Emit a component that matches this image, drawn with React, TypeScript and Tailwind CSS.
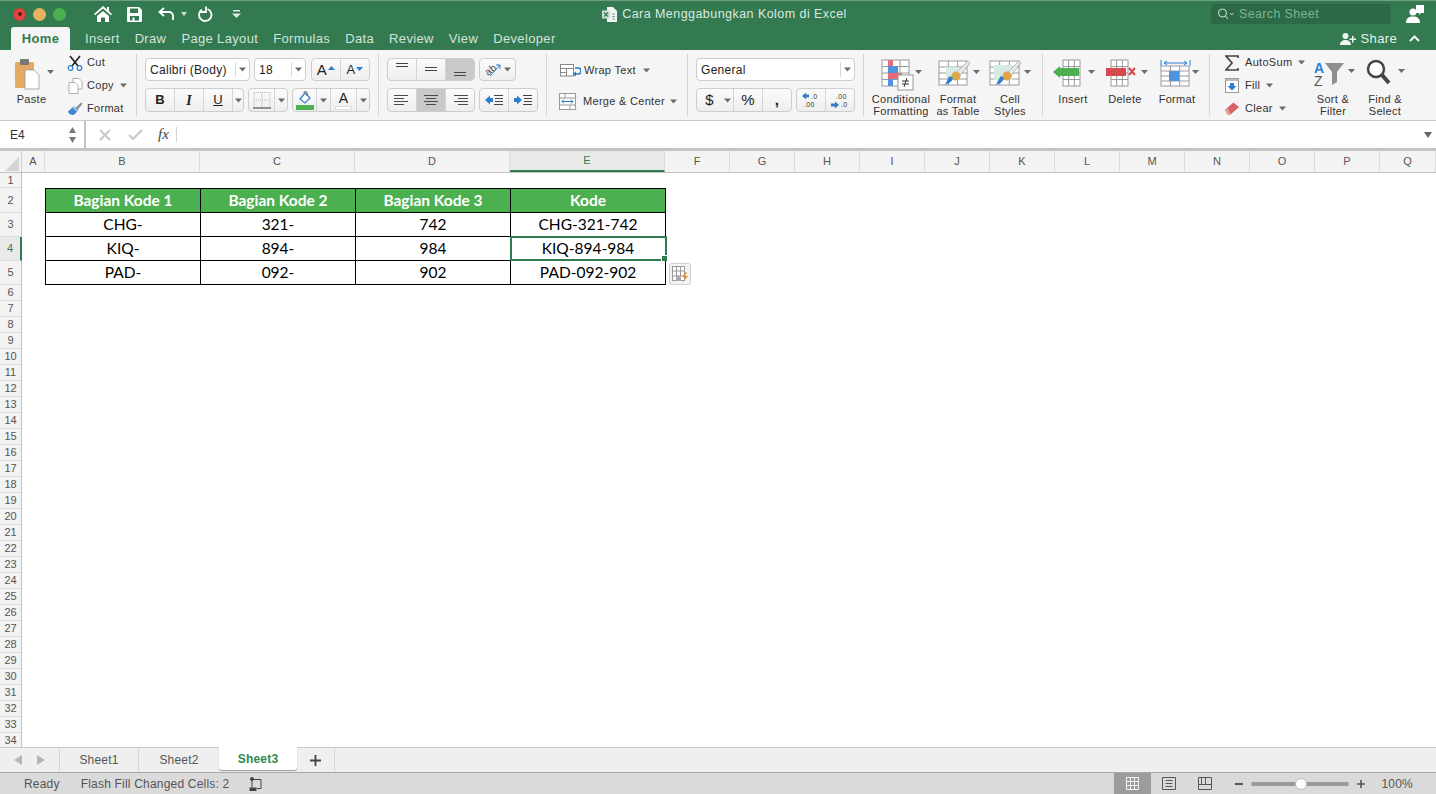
import React from 'react';

const Caret = ({ className = '' }: { className?: string }) => (
  <svg width="7" height="5" viewBox="0 0 7 5" className={'shrink-0 ' + className}>
    <path d="M0 .5h7L3.500 4.500z" fill="#6b6b6b" />
  </svg>
);

const tabs = ['Insert', 'Draw', 'Page Layout', 'Formulas', 'Data', 'Review', 'View', 'Developer'];

function TitleBar() {
  return (
    <div className="h-[27px] flex items-center border-t border-[#6d9f82] bg-[#337a50] shrink-0">
      <div className="flex-1 flex items-center pl-[13px]">
        <div className="flex gap-[7px]">
          <div className="w-[13px] h-[13px] rounded-full bg-[#e0443e] border border-[#c9403a] flex items-center justify-center">
            <div className="w-[4px] h-[4px] rounded-full bg-[#6b1210]" />
          </div>
          <div className="w-[13px] h-[13px] rounded-full bg-[#e6b35c]" />
          <div className="w-[13px] h-[13px] rounded-full bg-[#4bb04f]" />
        </div>
        <svg width="18" height="16" viewBox="0 0 18 16" className="ml-[28px]" fill="#fff">
          <path d="M9 0L0 8l1 1.200L9 2.500l8 6.700L18 8l-3-2.700V1h-2v2.500zM3 10l6-5 6 5v6h-4v-4.500H7V16H3z" />
        </svg>
        <svg width="15" height="15" viewBox="0 0 15 15" className="ml-[15px]">
          <path fillRule="evenodd" fill="#fff" d="M0 1a1 1 0 0 1 1-1h11l3 3v11a1 1 0 0 1-1 1H1a1 1 0 0 1-1-1zM3 1.500V6h8V1.500zM3 9v4.500h2.500V10.500h2V13.500H12V9z" />
        </svg>
        <svg width="17" height="14" viewBox="0 0 17 14" className="ml-[16px]" fill="none" stroke="#fff" strokeWidth="1.800">
          <path d="M6 1L1.500 5 6 9M2 5h9a4 4 0 0 1 4 4v4" />
        </svg>
        <svg width="6" height="4" viewBox="0 0 6 4" className="ml-[6px]"><path d="M0 0h6L3 4z" fill="#cfe0d6" /></svg>
        <svg width="16" height="16" viewBox="0 0 16 16" className="ml-[10px]" fill="none" stroke="#fff" strokeWidth="1.800">
          <path d="M5 3.500a6.200 6.200 0 1 0 5.500-.5M9 .5v5.500H3.500" />
        </svg>
        <svg width="9" height="8" viewBox="0 0 9 8" className="ml-[19px]" fill="#dfe9e3"><path d="M1 0h7v1.500H1zM0 3.500h9L4.500 8z" /></svg>
      </div>
      <div className="flex items-center gap-[5px] text-[12.5px] tracking-[0.45px] text-[#dce8e1]">
        <svg width="15" height="15" viewBox="0 0 15 15">
          <path d="M5 0h6l4 4v11H5z" fill="#f2f6f3" />
          <rect x="0" y="3.500" width="8" height="8" fill="#cfdcd4" />
          <path d="M2 5.500l4 4M6 5.500l-4 4" stroke="#337a50" strokeWidth="1.200" />
          <path d="M10 7h3M10 9.500h3M10 12h3" stroke="#7ea58e" />
        </svg>
        Cara Menggabungkan Kolom di Excel
      </div>
      <div className="flex-1 flex items-center justify-end">
        <div className="w-[180px] h-[20px] rounded-[3px] bg-[#2b6a44] flex items-center pl-[6px] text-[12.5px] tracking-[0.35px] text-[#7fb394]">
          <svg width="18" height="12" viewBox="0 0 18 12" fill="none" stroke="#d7e4dc" strokeWidth="1">
            <circle cx="5.500" cy="5" r="4" />
            <path d="M8.500 8l2.500 3M13 5l1.800 1.800L16.600 5" />
          </svg>
          <span className="ml-[4px]">Search Sheet</span>
        </div>
        <svg width="18" height="18" viewBox="0 0 18 18" className="ml-[15px] mr-[12px]" fill="#fff">
          <path d="M10 0h8v8h-3l-2 2V8h-3z" />
          <circle cx="7" cy="7" r="3.500" />
          <path d="M0 18c0-5 3-6.500 7-6.500s7 1.500 7 6.500z" />
        </svg>
      </div>
    </div>
  );
}

function TabRow() {
  return (
    <div className="h-[23px] flex bg-[#337a50] shrink-0 pl-[11px] text-[13px] tracking-[0.35px] font-medium text-[#d3e3da]">
      <div className="w-[59px] rounded-t-[3px] bg-[#f5f5f5] flex items-center justify-center font-bold text-[#337a50]">Home</div>
      {tabs.map((t) => (
        <div key={t} className="flex items-center ml-[15px]">{t}</div>
      ))}
      <div className="ml-auto flex items-center text-white">
        <svg width="16" height="12" viewBox="0 0 16 12" fill="#eef4f0">
          <circle cx="5.500" cy="3" r="3" />
          <path d="M0 12c0-3.500 2.500-5 5.500-5s5.500 1.500 5.500 5zM12 3h1.500v2.500H16V7h-2.500v2.500H12V7H9.500V5.500H12z" />
        </svg>
        <span className="ml-[5px] text-[#e8f0eb]">Share</span>
        <svg width="11" height="7" viewBox="0 0 11 7" fill="none" stroke="#eef4f0" strokeWidth="2" className="ml-[12px] mr-[16px]">
          <path d="M1 6l4.500-4.500L10 6" />
        </svg>
      </div>
    </div>
  );
}

const Sep = () => <div className="w-px my-[4px] bg-[#d6d6d6] shrink-0" />;

function Group({ className, children }: { className: string; children: React.ReactNode }) {
  return <div className={'shrink-0 h-full ' + className}>{children}</div>;
}

function BtnGroup({ className = '', children }: { className?: string; children: React.ReactNode }) {
  return (
    <div className={'flex rounded-[4px] border border-[#cdcdcd] bg-gradient-to-b from-[#fbfbfb] to-[#eeeeee] overflow-hidden ' + className}>
      {children}
    </div>
  );
}

function Cell({ className = '', active, children }: { className?: string; active?: boolean; children?: React.ReactNode }) {
  return (
    <div className={'flex items-center justify-center border-r last:border-r-0 border-[#d4d4d4] h-full ' + (active ? 'bg-[#c9c9c9] ' : '') + className}>
      {children}
    </div>
  );
}

function Lines({ rows }: { rows: [number, number][] }) {
  return (
    <svg width="18" height="12" viewBox="0 0 18 12" stroke="#4a4a4a" strokeWidth="1">
      {rows.map(([a, b], i) => (
        <path key={i} d={'M' + a + ' ' + (i * 3 + 1.5) + 'H' + b} />
      ))}
    </svg>
  );
}

function SmallAction({ icon, label, caret, gap = 'ml-[7px]' }: { icon: React.ReactNode; label: string; caret?: boolean; gap?: string }) {
  return (
    <div className="h-[23px] flex items-center">
      <div className="w-[16px] flex justify-center">{icon}</div>
      <span className={gap}>{label}</span>
      {caret && <Caret className="ml-[6px]" />}
    </div>
  );
}

function BigBtn({ w, label, label2, icon }: { w: string; label: string; label2?: string; icon: React.ReactNode }) {
  return (
    <div className={'shrink-0 flex flex-col items-center pt-[8px] ' + w}>
      <div className="h-[35px] w-full">{icon}</div>
      <div className="leading-[12px] text-center whitespace-nowrap">{label}</div>
      {label2 && <div className="leading-[12px] text-center whitespace-nowrap">{label2}</div>}
    </div>
  );
}

function MiniGrid({ x, y, w, h }: { x: number; y: number; w: number; h: number }) {
  const cw = w / 3;
  const ch = h / 4;
  return (
    <g stroke="#9a9a9a" strokeWidth="1" fill="none">
      <rect x={x} y={y} width={w} height={h} fill="#fff" />
      <path d={'M' + (x + cw) + ' ' + y + 'v' + h + 'M' + (x + 2 * cw) + ' ' + y + 'v' + h} />
      <path d={'M' + x + ' ' + (y + ch) + 'h' + w + 'M' + x + ' ' + (y + 2 * ch) + 'h' + w + 'M' + x + ' ' + (y + 3 * ch) + 'h' + w} />
    </g>
  );
}

const smallCaret = (x: number, y: number) => <path d={'M' + x + ' ' + y + 'h7l-3.500 4z'} fill="#6b6b6b" />;

const Brush = ({ x, y }: { x: number; y: number }) => (
  <g transform={'translate(' + x + ' ' + y + ')'}>
    <path d="M14 13L27 0l2 2L18 16z" fill="#e8e8e8" stroke="#9a9a9a" strokeWidth=".7" />
    <circle cx="15" cy="15" r="4.500" fill="#dfa54a" />
    <path d="M12 17c-1 4-5 6-9 7 3-2 3-6 6-9z" fill="#2f7dd1" />
  </g>
);

function Ribbon() {
  return (
    <div className="h-[71px] flex bg-[#f5f5f5] border-b border-[#c9c9c9] shrink-0 text-[11px] tracking-[0.3px] text-[#333]">
      <Group className="w-[136px] flex">
        <BigBtn
          w="w-[63px]"
          label="Paste"
          icon={
            <svg width="63" height="35" viewBox="0 0 63 35" className="-mt-[1px]">
              <rect x="15" y="5" width="19" height="26" rx="1.500" fill="#e3aa63" />
              <rect x="20" y="2" width="9" height="6" rx="1" fill="#777" />
              <path d="M25 13h9l5 5v14H25z" fill="#fff" stroke="#9a9a9a" strokeWidth=".8" />
              {smallCaret(47, 13)}
            </svg>
          }
        />
        <div className="pl-[4px] pt-[1px]">
          <SmallAction
            label="Cut"
            gap="ml-[4px]"
            icon={
              <svg width="16" height="16" viewBox="0 0 16 16" fill="none">
                <path d="M3 1l8 10M13 1L5 11" stroke="#222" strokeWidth="1.600" />
                <circle cx="3.500" cy="13" r="2.300" stroke="#2f7dd1" strokeWidth="1.200" />
                <circle cx="12.500" cy="13" r="2.300" stroke="#2f7dd1" strokeWidth="1.200" />
              </svg>
            }
          />
          <SmallAction
            label="Copy"
            gap="ml-[4px]"
            caret
            icon={
              <svg width="15" height="16" viewBox="0 0 15 16" fill="#fff" stroke="#9a9a9a" strokeWidth=".8">
                <path d="M5 .5h6l3 3V11H5z" />
                <path d="M1 4.500h6l3 3v8H1z" />
              </svg>
            }
          />
          <SmallAction
            label="Format"
            gap="ml-[4px]"
            icon={
              <svg width="17" height="15" viewBox="0 0 17 15">
                <path d="M9 7l6-6 1.500 1.500L11 9z" fill="#8a8a8a" />
                <path d="M1 11l6-6 5 4-4 5c-3 1-5 0-7-3z" fill="#3f86d3" />
                <path d="M6 6l5 4" stroke="#d8e5f3" strokeWidth="1.200" />
              </svg>
            }
          />
        </div>
      </Group>
      <Sep />
      <Group className="w-[241px] pl-[8px] pt-[8px] flex flex-col gap-[7px] text-[12px] text-[#222]">
        <div className="flex h-[23px] gap-[4px]">
          <div className="w-[105px] rounded-[4px] border border-[#cdcdcd] bg-white flex items-center pl-[4px]">
            <span className="flex-1">Calibri (Body)</span>
            <div className="w-[14px] h-[15px] border-l border-[#d8d8d8] flex items-center justify-center"><Caret /></div>
          </div>
          <div className="w-[52px] rounded-[4px] border border-[#cdcdcd] bg-white flex items-center pl-[4px]">
            <span className="flex-1">18</span>
            <div className="w-[14px] h-[15px] border-l border-[#d8d8d8] flex items-center justify-center"><Caret /></div>
          </div>
          <BtnGroup className="w-[59px] ml-[1px]">
            <Cell className="flex-1">
              <span className="text-[15px] leading-none">A</span>
              <svg width="7" height="4" viewBox="0 0 7 4" className="ml-[1px] -mt-[3px]"><path d="M3.500 0L7 4H0z" fill="#2f7dd1" /></svg>
            </Cell>
            <Cell className="flex-1">
              <span className="text-[13px] leading-none">A</span>
              <svg width="7" height="4" viewBox="0 0 7 4" className="ml-[1px] -mt-[2px]"><path d="M0 0h7L3.500 4z" fill="#2f7dd1" /></svg>
            </Cell>
          </BtnGroup>
        </div>
        <div className="flex h-[24px] gap-[4px]">
          <BtnGroup className="w-[99px]">
            <Cell className="w-[29px] font-bold text-[13px]">B</Cell>
            <Cell className="w-[29px] italic font-['Liberation_Serif'] font-bold text-[14px]">I</Cell>
            <Cell className="w-[29px] underline text-[13px]">U</Cell>
            <Cell className="flex-1"><Caret /></Cell>
          </BtnGroup>
          <BtnGroup className="w-[40px]">
            <Cell className="flex-1">
              <svg width="18" height="17" viewBox="0 0 18 17" fill="none" stroke="#b5b5b5" strokeDasharray="1 1">
                <path d="M1 .5h16v15M1 .5v15M9 .5v15M1 8h16" />
                <path d="M0 16h18" stroke="#333" strokeDasharray="none" />
              </svg>
            </Cell>
            <Cell className="w-[12px]"><Caret /></Cell>
          </BtnGroup>
          <BtnGroup className="w-[78px]">
            <Cell className="w-[24px]">
              <svg width="18" height="19" viewBox="0 0 18 19">
                <path d="M4 8l5-6 5 5-5 5z" fill="#fff" stroke="#2f7dd1" strokeWidth="1.200" />
                <path d="M8 2c0-2 3-2 3 0v3" fill="none" stroke="#555" />
                <rect y="14" width="18" height="5" fill="#4caf50" />
              </svg>
            </Cell>
            <Cell className="w-[14px]"><Caret /></Cell>
            <Cell className="w-[26px]">
              <div className="flex flex-col items-center">
                <span className="text-[14px] leading-[15px]">A</span>
                <div className="w-[17px] h-[4px] bg-white border border-[#dddddd]" />
              </div>
            </Cell>
            <Cell className="flex-1"><Caret /></Cell>
          </BtnGroup>
        </div>
      </Group>
      <Sep />
      <Group className="w-[167px] pl-[8px] pt-[8px] flex flex-col gap-[7px]">
        <div className="flex h-[23px] gap-[4px]">
          <BtnGroup className="w-[88px]">
            <Cell className="flex-1 items-start pt-[4px]">
              <svg width="14" height="5" viewBox="0 0 14 5" stroke="#444"><path d="M1 .5h12M1 3.500h12" /></svg>
            </Cell>
            <Cell className="flex-1">
              <svg width="14" height="5" viewBox="0 0 14 5" stroke="#444"><path d="M1 .5h12M1 3.500h12" /></svg>
            </Cell>
            <Cell className="flex-1 items-end pb-[3px]" active>
              <svg width="14" height="5" viewBox="0 0 14 5" stroke="#444"><path d="M1 .5h12M1 3.500h12" /></svg>
            </Cell>
          </BtnGroup>
          <BtnGroup className="w-[37px]">
            <Cell className="flex-1">
              <svg width="18" height="17" viewBox="0 0 18 17">
                <text x="0" y="12" fontSize="10" fill="#444" transform="rotate(-38 6 9)" fontFamily="Liberation Sans">ab</text>
                <path d="M5 15L15 4M11 4h4v4" fill="none" stroke="#2f7dd1" />
              </svg>
              <Caret className="ml-[1px]" />
            </Cell>
          </BtnGroup>
        </div>
        <div className="flex h-[24px] gap-[4px]">
          <BtnGroup className="w-[88px]">
            <Cell className="flex-1"><Lines rows={[[1, 15], [1, 11], [1, 15], [1, 11]]} /></Cell>
            <Cell className="flex-1" active><Lines rows={[[2, 16], [4, 14], [2, 16], [4, 14]]} /></Cell>
            <Cell className="flex-1"><Lines rows={[[3, 17], [7, 17], [3, 17], [7, 17]]} /></Cell>
          </BtnGroup>
          <BtnGroup className="w-[59px]">
            <Cell className="flex-1">
              <svg width="18" height="12" viewBox="0 0 18 12">
                <path d="M0 6l5-4.500V4h3v4H5v2.500z" fill="#2f7dd1" />
                <path d="M9 1.500h9M10 4.500h8M10 7.500h8M9 10.500h9" stroke="#444" />
              </svg>
            </Cell>
            <Cell className="flex-1">
              <svg width="18" height="12" viewBox="0 0 18 12">
                <path d="M8 6L3 1.500V4H0v4h3v2.500z" fill="#2f7dd1" />
                <path d="M9 1.500h9M10 4.500h8M10 7.500h8M9 10.500h9" stroke="#444" />
              </svg>
            </Cell>
          </BtnGroup>
        </div>
      </Group>
      <Sep />
      <Group className="w-[140px] pl-[13px] pt-[9px] flex flex-col gap-[7px]">
        <div className="h-[23px] flex items-center">
          <svg width="21" height="13" viewBox="0 0 21 13" fill="none">
            <rect x=".5" y=".5" width="13" height="11.500" stroke="#888" fill="#fff" />
            <path d="M.5 4.500h13M.5 8.500h6M6.500 4.500v7.500" stroke="#888" />
            <path d="M15 4h3a2.500 2.500 0 0 1 0 6h-3" stroke="#2f7dd1" strokeWidth="1.600" />
            <path d="M16 7.500L12.500 10l3.500 2.500z" fill="#2f7dd1" />
          </svg>
          <span className="ml-[3px]">Wrap Text</span>
          <Caret className="ml-[7px]" />
        </div>
        <div className="h-[24px] flex items-center">
          <svg width="21" height="17" viewBox="0 0 21 17" fill="none" className="-ml-[1px]">
            <rect x=".5" y=".5" width="16" height="16" stroke="#999" fill="#fff" />
            <path d="M.5 5h16M.5 12h16M6 .5V5M11 12v4.500" stroke="#999" />
            <path d="M3 8.500h11M5 6.500l-2 2 2 2M12 6.500l2 2-2 2" stroke="#2f7dd1" />
          </svg>
          <span className="ml-[3px]">Merge &amp; Center</span>
          <Caret className="ml-[5px]" />
        </div>
      </Group>
      <Sep />
      <Group className="w-[175px] pl-[8px] pt-[8px] flex flex-col gap-[7px] text-[#222]">
        <div className="w-[159px] h-[23px] rounded-[4px] border border-[#cdcdcd] bg-white flex items-center pl-[4px] text-[12px]">
          <span className="flex-1">General</span>
          <div className="w-[14px] h-[15px] border-l border-[#d8d8d8] flex items-center justify-center"><Caret /></div>
        </div>
        <div className="flex h-[24px] gap-[4px]">
          <BtnGroup className="w-[96px]">
            <Cell className="w-[25px] border-r-0 text-[15px]">$</Cell>
            <Cell className="w-[12px]"><Caret /></Cell>
            <Cell className="w-[29px] text-[15px]">%</Cell>
            <Cell className="flex-1 font-bold text-[15px]">,</Cell>
          </BtnGroup>
          <BtnGroup className="w-[59px]">
            <Cell className="flex-1">
              <svg width="18" height="17" viewBox="0 0 18 17">
                <path d="M0 4l4-3.500V2.500h3v3H4v2z" fill="#2f7dd1" />
                <text x="9" y="7" fontSize="7" fill="#333" fontFamily="Liberation Sans">.0</text>
                <text x="2" y="15" fontSize="7" fill="#333" fontFamily="Liberation Sans">.00</text>
              </svg>
            </Cell>
            <Cell className="flex-1">
              <svg width="18" height="17" viewBox="0 0 18 17">
                <text x="5" y="7" fontSize="7" fill="#333" fontFamily="Liberation Sans">.00</text>
                <path d="M8 13L4 9.500v2H0v3h4v2z" fill="#2f7dd1" />
                <text x="10" y="15" fontSize="7" fill="#333" fontFamily="Liberation Sans">.0</text>
              </svg>
            </Cell>
          </BtnGroup>
        </div>
      </Group>
      <Sep />
      <Group className="w-[178px] flex">
        <BigBtn
          w="w-[74px]"
          label="Conditional"
          label2="Formatting"
          icon={
            <svg width="74" height="35" viewBox="0 0 74 35" className="overflow-visible">
              <MiniGrid x={18} y={2} w={27} h={26} />
              <rect x="24" y="2" width="5" height="6" fill="#e66d75" />
              <rect x="24" y="8" width="10" height="7" fill="#4d94dc" />
              <rect x="24" y="15" width="14" height="6" fill="#e66d75" />
              <rect x="24" y="21" width="5" height="7" fill="#4d94dc" />
              <rect x="34" y="17" width="15" height="15" fill="#fff" stroke="#999" />
              <path d="M38 23h7M38 26h7M43 20l-3 9" stroke="#333" fill="none" />
              {smallCaret(51, 12)}
            </svg>
          }
        />
        <BigBtn
          w="w-[40px]"
          label="Format"
          label2="as Table"
          icon={
            <svg width="40" height="35" viewBox="0 0 40 35" className="overflow-visible">
              <MiniGrid x={1} y={3} w={28} h={24} />
              <rect x="8" y="9" width="12" height="10" fill="#d5ebe3" />
              <Brush x={3} y={3} />
              {smallCaret(35, 12)}
            </svg>
          }
        />
        <BigBtn
          w="w-[64px]"
          label="Cell"
          label2="Styles"
          icon={
            <svg width="64" height="35" viewBox="0 0 64 35" className="overflow-visible">
              <MiniGrid x={12} y={3} w={29} h={24} />
              <rect x="16" y="7" width="18" height="15" fill="#d5ebe3" />
              <Brush x={14} y={3} />
              {smallCaret(46, 12)}
            </svg>
          }
        />
      </Group>
      <Sep />
      <Group className="w-[166px] flex">
        <BigBtn
          w="w-[60px]"
          label="Insert"
          icon={
            <svg width="60" height="35" viewBox="0 0 60 35">
              <MiniGrid x={20} y={2} w={17} h={26} />
              <rect x="16" y="10" width="20" height="8" fill="#4caf50" />
              <path d="M10 14l7-6v12z" fill="#4caf50" />
              {smallCaret(45, 12)}
            </svg>
          }
        />
        <BigBtn
          w="w-[44px]"
          label="Delete"
          icon={
            <svg width="44" height="35" viewBox="0 0 44 35" className="overflow-visible">
              <MiniGrid x={8} y={2} w={17} h={26} />
              <rect x="3" y="10" width="20" height="8" fill="#d9474f" />
              <path d="M26 10l6 7M32 10l-6 7" stroke="#d9474f" strokeWidth="2" />
              {smallCaret(38, 12)}
            </svg>
          }
        />
        <BigBtn
          w="w-[60px]"
          label="Format"
          icon={
            <svg width="60" height="35" viewBox="0 0 60 35">
              <path d="M14 2v6M43 2v6M17 5h23M17 5l3-2M17 5l3 2M40 5l-3-2M40 5l-3 2" stroke="#2f7dd1" fill="none" />
              <MiniGrid x={14} y={8} w={28} h={20} />
              <rect x="22" y="13" width="10" height="10" fill="#4d94dc" />
              {smallCaret(45, 12)}
            </svg>
          }
        />
      </Group>
      <Sep />
      <Group className="flex-1 flex">
        <div className="w-[97px] pl-[14px] pt-[1px]">
          <SmallAction
            label="AutoSum"
            gap="ml-[5px]"
            caret
            icon={
              <svg width="14" height="16" viewBox="0 0 14 16" fill="none"><path d="M13 3V1H1l6 7-6 7h12v-2" stroke="#444" strokeWidth="1.700" /></svg>
            }
          />
          <SmallAction
            label="Fill"
            gap="ml-[5px]"
            caret
            icon={
              <svg width="14" height="15" viewBox="0 0 14 15">
                <rect x=".5" y=".5" width="13" height="14" fill="#fff" stroke="#999" />
                <rect x="1" y="1" width="12" height="2" fill="#bbb" />
                <path d="M5 5h4v3h2.500L7 12.500 2.500 8H5z" fill="#2f7dd1" />
              </svg>
            }
          />
          <SmallAction
            label="Clear"
            gap="ml-[5px]"
            caret
            icon={
              <svg width="17" height="15" viewBox="0 0 17 15">
                <path d="M1 9l9-8 6 5-9 8H4z" fill="#d9626a" />
                <path d="M1 9l3 5h3L4 7z" fill="#eb9aa0" />
              </svg>
            }
          />
        </div>
        <BigBtn
          w="w-[52px]"
          label="Sort &"
          label2="Filter"
          icon={
            <svg width="52" height="35" viewBox="0 0 52 35" className="overflow-visible">
              <text x="7" y="15" fontSize="14" fontWeight="bold" fill="#2f7dd1" fontFamily="Liberation Sans">A</text>
              <text x="7" y="28" fontSize="14" fill="#555" fontFamily="Liberation Sans">Z</text>
              <path d="M18 5h19l-7 9v10l-5 3V14z" fill="#8f8f8f" />
              {smallCaret(41, 11)}
            </svg>
          }
        />
        <BigBtn
          w="w-[52px]"
          label="Find &"
          label2="Select"
          icon={
            <svg width="52" height="35" viewBox="0 0 52 35" className="overflow-visible">
              <circle cx="17" cy="11" r="8" fill="#fff" stroke="#444" strokeWidth="2.500" />
              <path d="M23 17l7 8" stroke="#444" strokeWidth="4" />
              {smallCaret(39, 11)}
            </svg>
          }
        />
      </Group>
    </div>
  );
}

function FormulaBar() {
  return (
    <div className="h-[30px] flex bg-white border-b-[3px] border-b-[#c4c4c4] shrink-0">
      <div className="w-[86px] border-r-2 border-r-[#c4c4c4] flex items-center justify-between pl-[10px] pr-[8px] text-[12px] text-[#333]">
        E4
        <svg width="7" height="16" viewBox="0 0 7 16" fill="#777"><path d="M3.500 0L7 6H0zM0 10h7l-3.500 6z" /></svg>
      </div>
      <svg width="12" height="12" viewBox="0 0 12 12" className="ml-[13px] self-center" stroke="#c8c8c8" strokeWidth="2"><path d="M1 1l10 10M11 1L1 11" /></svg>
      <svg width="15" height="12" viewBox="0 0 15 12" className="ml-[17px] self-center" fill="none" stroke="#c8c8c8" strokeWidth="2"><path d="M1 6l4 4 9-9" /></svg>
      <div className="ml-[15px] self-center font-['Liberation_Serif'] italic text-[15px] text-[#444]">fx</div>
      <div className="ml-[7px] w-px h-[15px] self-center bg-[#d5d5d5]" />
      <div className="ml-auto mr-[4px] self-center">
        <svg width="8" height="6" viewBox="0 0 8 6"><path d="M0 0h8L4 6z" fill="#666" /></svg>
      </div>
    </div>
  );
}

const cols: [string, string][] = [
  ['A', 'w-[23px]'], ['B', 'w-[155px]'], ['C', 'w-[155px]'], ['D', 'w-[155px]'], ['E', 'w-[155px]'],
  ['F', 'w-[65px]'], ['G', 'w-[65px]'], ['H', 'w-[65px]'], ['I', 'w-[65px]'], ['J', 'w-[65px]'],
  ['K', 'w-[65px]'], ['L', 'w-[65px]'], ['M', 'w-[65px]'], ['N', 'w-[65px]'], ['O', 'w-[65px]'],
  ['P', 'w-[65px]'], ['Q', 'flex-1'],
];

const table: Record<number, string[]> = {
  2: ['Bagian Kode 1', 'Bagian Kode 2', 'Bagian Kode 3', 'Kode'],
  3: ['CHG-', '321-', '742', 'CHG-321-742'],
  4: ['KIQ-', '894-', '984', 'KIQ-894-984'],
  5: ['PAD-', '092-', '902', 'PAD-092-902'],
};

function Sheet() {
  const rows = Array.from({ length: 34 }, (_, i) => i + 1);
  return (
    <div className="flex-1 min-h-0 overflow-hidden bg-white">
      <div className="h-[22px] flex bg-[#f3f3f3] border-b border-[#c4c4c4] text-[11px] text-[#555]">
        <div className="w-[22px] shrink-0 border-r border-[#d0d0d0] relative">
          <svg width="14" height="14" viewBox="0 0 14 14" className="absolute right-[2px] bottom-[1px]"><path d="M14 0v14H0z" fill="#d4d4d4" /></svg>
        </div>
        {cols.map(([c, w]) => (
          <div
            key={c}
            className={'shrink-0 flex items-center justify-center border-r border-[#dcdcdc] ' + w + (c === 'E' ? ' bg-[#e9e9e9] text-[#2f7d4f] border-b-2 border-b-[#2f7d4f]' : '')}
          >
            {c}
          </div>
        ))}
      </div>
      {rows.map((r) => {
        const data = table[r];
        return (
          <div key={r} className={'flex ' + (r === 1 ? 'h-[15px]' : r === 2 ? 'h-[25px]' : data ? 'h-[24px]' : 'h-[16px]')}>
            <div
              className={'w-[22px] shrink-0 flex items-center justify-center text-[11px] border-b border-[#dcdcdc] ' + (r === 4 ? 'bg-[#e9e9e9] text-[#2f7d4f] border-r-2 border-r-[#2f7d4f]' : 'bg-[#f3f3f3] text-[#555] border-r border-r-[#c4c4c4]')}
            >
              {r}
            </div>
            <div className="w-[23px] shrink-0" />
            {data && data.map((v, i) => (
              <div
                key={i}
                className={
                  'relative shrink-0 flex items-center justify-center font-[Lato] text-[15.5px] border-b border-r border-black ' +
                  (i === 0 ? 'w-[156px] border-l ' : 'w-[155px] ') +
                  (r === 2 ? 'border-t bg-[#4caf50] font-bold text-white' : 'text-black')
                }
              >
                {v}
                {r === 4 && i === 3 && (
                  <div className="absolute -left-[1px] -top-[1px] -right-[2px] -bottom-[1px] border-2 border-[#2f7d4f]">
                    <div className="absolute -right-[3px] -bottom-[3px] w-[5px] h-[5px] bg-[#2f7d4f] border border-white box-content" />
                  </div>
                )}
                {r === 5 && i === 3 && (
                  <div className="absolute left-[158px] top-[2px] w-[22px] h-[22px] rounded-[3px] border border-[#cfcfcf] bg-[#f3f3f3] flex items-center justify-center">
                    <svg width="17" height="16" viewBox="0 0 17 16" fill="none">
                      <rect x=".5" y=".5" width="12" height="14" fill="#fff" stroke="#999" />
                      <path d="M.5 5h12M.5 10h12M4.500.5v14M8.500.5v14" stroke="#999" />
                      <rect x="4" y="10" width="5" height="5" fill="#aaa" />
                      <path d="M14 6l-4 5h3l-2 5 5-6h-3l2-4z" fill="#e58a2b" />
                    </svg>
                  </div>
                )}
              </div>
            ))}
          </div>
        );
      })}
    </div>
  );
}

function SheetTabs() {
  return (
    <div className="h-[25px] flex bg-[#efefef] border-t border-[#c9c9c9] shrink-0 text-[12px] text-[#555] tracking-[0.2px]">
      <div className="w-[60px] flex items-center justify-center gap-[15px] border-r border-[#d6d6d6]">
        <svg width="8" height="10" viewBox="0 0 8 10"><path d="M8 0v10L0 5z" fill="#b5b5b5" /></svg>
        <svg width="8" height="10" viewBox="0 0 8 10"><path d="M0 0v10l8-5z" fill="#b5b5b5" /></svg>
      </div>
      <div className="w-[79px] flex items-center justify-center border-r border-[#d6d6d6]">Sheet1</div>
      <div className="w-[80px] flex items-center justify-center">Sheet2</div>
      <div className="w-[78px] h-[23px] -mt-px flex items-center justify-center bg-white rounded-b-[3px] font-bold text-[#2f8a55] shadow-[0_1px_1px_#999]">Sheet3</div>
      <div className="w-[38px] flex items-center justify-center border-r border-[#d6d6d6]">
        <svg width="11" height="11" viewBox="0 0 11 11" stroke="#444" strokeWidth="1.800"><path d="M5.500 0v11M0 5.500h11" /></svg>
      </div>
    </div>
  );
}

function StatusBar() {
  return (
    <div className="h-[22px] flex items-center bg-[#dadada] border-t border-[#a8a8a8] shrink-0 text-[12px] text-[#555] tracking-[0.2px]">
      <span className="ml-[24px]">Ready</span>
      <span className="ml-[21px]">Flash Fill Changed Cells: 2</span>
      <svg width="14" height="14" viewBox="0 0 14 14" className="ml-[20px]" fill="none" stroke="#444">
        <path d="M3 3v8M3 2.500h9v9H8" />
        <circle cx="3" cy="2" r="1.500" fill="#444" />
        <rect x="1" y="11" width="6" height="2.500" fill="#444" />
      </svg>
      <div className="ml-auto w-[37px] h-full bg-[#9c9c9c] flex items-center justify-center">
        <svg width="13" height="13" viewBox="0 0 13 13" stroke="#f3f3f3"><path d="M.5.500h12v12H.5zM4.500.5v12M8.500.5v12M.5 4.500h12M.5 8.500h12" fill="none" /></svg>
      </div>
      <div className="w-[36px] flex justify-center">
        <svg width="14" height="13" viewBox="0 0 14 13" stroke="#555" fill="none"><path d="M.5.500h13v12H.5zM3.500 3.500h7M3.500 6.500h7M3.500 9.500h7" /></svg>
      </div>
      <div className="w-[36px] flex justify-center">
        <svg width="14" height="13" viewBox="0 0 14 13" stroke="#555" fill="none"><path d="M.5.500h13v12H.5zM.5 7.500h13M3.500.5v7h4V.5" /></svg>
      </div>
      <svg width="8" height="2" viewBox="0 0 8 2" className="ml-[12px]"><path d="M0 0h8v2H0z" fill="#555" /></svg>
      <div className="ml-[8px] w-[98px] h-[4px] rounded-full bg-[#9a9a9a] relative">
        <div className="absolute left-[44px] -top-[4px] w-[12px] h-[12px] rounded-full bg-white border border-[#bbbbbb]" />
      </div>
      <svg width="8" height="8" viewBox="0 0 8 8" className="ml-[8px]" stroke="#555" strokeWidth="1.600"><path d="M4 0v8M0 4h8" /></svg>
      <span className="ml-[17px] mr-[23px]">100%</span>
    </div>
  );
}

export default function App() {
  return (
    <div className="w-[1436px] h-[794px] flex flex-col overflow-hidden font-['Liberation_Sans',sans-serif]">
      <TitleBar />
      <TabRow />
      <Ribbon />
      <FormulaBar />
      <Sheet />
      <SheetTabs />
      <StatusBar />
    </div>
  );
}
